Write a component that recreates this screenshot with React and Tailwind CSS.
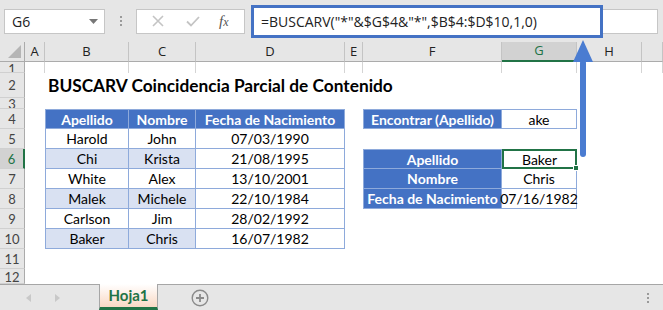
import React from 'react'

const people = [
  ['Harold', 'John', '07/03/1990'],
  ['Chi', 'Krista', '21/08/1995'],
  ['White', 'Alex', '13/10/2001'],
  ['Malek', 'Michele', '22/10/1984'],
  ['Carlson', 'Jim', '28/02/1992'],
  ['Baker', 'Chris', '16/07/1982'],
]

const colNames = ['A', 'B', 'C', 'D', 'E', 'F', 'G', 'H', '']
const rows = [1, 2, 3, 4, 5, 6, 7, 8, 9, 10, 11, 12]

const lookup = {
  4: { F: 'Encontrar (Apellido)', G: 'ake' },
  6: { F: 'Apellido', G: 'Baker' },
  7: { F: 'Nombre', G: 'Chris' },
  8: { F: 'Fecha de Nacimiento', G: '07/16/1982' },
}

function RowHeader({ r }) {
  const active = r === 6
  const align = r === 1 || r === 3 ? 'items-end' : r === 12 ? 'items-start' : 'items-center'
  return (
    <div
      className={`flex justify-center overflow-hidden border-b border-[#d0d0d0] text-[13px] leading-[16px] ${align} ${
        active
          ? 'bg-[#d2d2d2] text-[#217346] border-r-2 border-r-[#217346]'
          : 'bg-[#e6e6e6] text-[#444] border-r border-r-[#ababab]'
      }`}
    >
      <span className={r === 1 ? 'mb-[-5px]' : r === 3 ? 'mb-[-4px]' : ''}>{r}</span>
    </div>
  )
}

function Cell({ r, col }) {
  // tabla de la izquierda
  if (r >= 4 && r <= 10 && (col === 'B' || col === 'C' || col === 'D')) {
    const header = r === 4
    const i = col === 'B' ? 0 : col === 'C' ? 1 : 2
    const text = header ? ['Apellido', 'Nombre', 'Fecha de Nacimiento'][i] : people[r - 5][i]
    const shaded = !header && r % 2 === 0 && col !== 'D'
    return (
      <div
        className={`flex items-center justify-center whitespace-nowrap border-r border-b border-[#8eaadb] ${
          col === 'B' ? 'border-l' : ''
        } ${header ? 'border-t bg-[#4472c4] font-bold text-white' : shaded ? 'bg-[#d9e1f2] text-black' : 'bg-white text-black'}`}
      >
        {text}
      </div>
    )
  }

  // tabla de búsqueda
  if (lookup[r] && (col === 'F' || col === 'G')) {
    const text = lookup[r][col]
    const top = r === 4 || r === 6
    if (col === 'F') {
      return (
        <div
          className={`flex items-center justify-center whitespace-nowrap border-l border-r border-b border-[#8eaadb] bg-[#4472c4] font-bold text-white ${
            top ? 'border-t' : ''
          }`}
        >
          {text}
        </div>
      )
    }
    if (r === 6) {
      return (
        <div className="relative flex items-center justify-center border-2 border-[#217346] bg-white text-black">
          {text}
          <span className="absolute -right-[4px] -bottom-[4px] h-[6px] w-[6px] border border-white bg-[#217346]" />
        </div>
      )
    }
    return (
      <div
        className={`flex items-center justify-center whitespace-nowrap border-r border-b border-[#8eaadb] bg-white text-black ${
          top ? 'border-t' : ''
        }`}
      >
        {text}
      </div>
    )
  }

  if (r === 2 && col === 'B') {
    return (
      <div className="relative z-10 flex items-center whitespace-nowrap pl-[3px] text-[17.3px] font-bold text-black">
        BUSCARV Coincidencia Parcial de Contenido
      </div>
    )
  }

  if (r === 1) return <div className="border-r border-[#d4d4d4]" />
  return <div />
}

export default function App() {
  return (
    <div className="relative h-[310px] w-[663px] overflow-hidden bg-white font-['Lato',sans-serif] text-[14px]">
      {/* Barra de fórmulas */}
      <div className="flex h-[42px] items-center bg-[#e6e6e6] pl-[4px] font-['Open_Sans',sans-serif]">
        <div className="flex h-[25px] w-[101px] items-center justify-between border border-[#c6c6c6] bg-white pl-[7px] pr-[6px] text-[14px] text-[#222]">
          <span>G6</span>
          <svg width="9" height="5" viewBox="0 0 9 5">
            <path d="M0 0h9L4.5 5z" fill="#777" />
          </svg>
        </div>
        <div className="flex w-[31px] flex-col items-center gap-[2px]">
          <span className="h-[2px] w-[2px] bg-[#9a9a9a]" />
          <span className="h-[2px] w-[2px] bg-[#9a9a9a]" />
          <span className="h-[2px] w-[2px] bg-[#9a9a9a]" />
        </div>
        <div className="flex h-[25px] w-[109px] items-center border border-[#c6c6c6] bg-white">
          <svg className="ml-[15px]" width="12" height="12" viewBox="0 0 12 12">
            <path d="M1 1l10 10M11 1L1 11" stroke="#c4c4c4" strokeWidth="1.6" />
          </svg>
          <svg className="ml-[22px]" width="14" height="11" viewBox="0 0 14 11">
            <path d="M1 5.5l4 4L13 1" stroke="#c4c4c4" strokeWidth="1.8" fill="none" />
          </svg>
          <span className="ml-[19px] font-['Liberation_Serif',serif] text-[15px] italic text-[#555]">
            f<span className="text-[12px]">x</span>
          </span>
        </div>
        <div className="ml-[6px] flex h-[33px] w-[352px] items-center border-[3px] border-[#4472c4] bg-white pl-[7px] text-[14px] text-[#222]">
          =BUSCARV("*"&amp;$G$4&amp;"*",$B$4:$D$10,1,0)
        </div>
        <div className="h-[25px] w-[55px] border-y border-r border-[#c6c6c6] bg-white" />
      </div>

      {/* Hoja */}
      <div className="grid grid-cols-[25px_20px_84px_67px_149px_18px_139px_75px_65px_1fr] grid-rows-[20px_11px_25px_11px_repeat(8,20px)_15px]">
        <div className="relative border-r border-b border-[#ababab] bg-[#e6e6e6]">
          <svg className="absolute right-[3px] bottom-[3px]" width="13" height="13" viewBox="0 0 13 13">
            <path d="M13 0v13H0z" fill="#b5b5b5" />
          </svg>
        </div>
        {colNames.map((c) =>
          c === 'G' ? (
            <div
              key={c}
              className="flex items-center justify-center border-r border-b-2 border-r-[#c4c4c4] border-b-[#217346] bg-[#d2d2d2] text-[13px] text-[#217346] font-['Open_Sans',sans-serif]"
            >
              {c}
            </div>
          ) : (
            <div
              key={c || 'x'}
              className="flex items-center justify-center border-r border-b border-r-[#c4c4c4] border-b-[#ababab] bg-[#e6e6e6] text-[13px] text-[#222] font-['Open_Sans',sans-serif]"
            >
              {c}
            </div>
          )
        )}
        {rows.map((r) => (
          <React.Fragment key={r}>
            <RowHeader r={r} />
            {colNames.map((c) => (
              <Cell key={c || 'x'} r={r} col={c} />
            ))}
          </React.Fragment>
        ))}
      </div>

      {/* Pestañas */}
      <div className="flex h-[26px] items-stretch border-t border-[#a6a6a6] bg-[#e6e6e6]">
        <div className="flex w-[99px] items-center">
          <svg className="ml-[26px]" width="5" height="8" viewBox="0 0 5 8">
            <path d="M5 0v8L0 4z" fill="#c8c8c8" />
          </svg>
          <svg className="ml-[24px]" width="5" height="8" viewBox="0 0 5 8">
            <path d="M0 0v8l5-4z" fill="#c8c8c8" />
          </svg>
        </div>
        <div className="-mt-px flex w-[59px] items-center justify-center border-x border-b-[3px] border-x-[#a6a6a6] border-b-[#217346] bg-gradient-to-b from-white to-[#f9d8c4] font-bold text-[15px] text-[#217346]">
          Hoja1
        </div>
        <div className="flex items-center pl-[33px]">
          <svg width="18" height="18" viewBox="0 0 18 18">
            <circle cx="9" cy="9" r="7.8" stroke="#8a8a8a" strokeWidth="1.4" fill="none" />
            <path d="M9 5v8M5 9h8" stroke="#8a8a8a" strokeWidth="1.8" />
          </svg>
        </div>
        <div className="ml-auto mr-[14px] flex flex-col justify-center gap-[2px]">
          <span className="h-[2px] w-[2px] bg-[#9a9a9a]" />
          <span className="h-[2px] w-[2px] bg-[#9a9a9a]" />
          <span className="h-[2px] w-[2px] bg-[#9a9a9a]" />
        </div>
      </div>

      {/* Flecha */}
      <svg className="absolute left-[570px] top-[38px]" width="26" height="122" viewBox="0 0 26 122">
        <path d="M13 2L3 24h20z" fill="#4a7cd1" />
        <rect x="10" y="22" width="6" height="97" rx="3" fill="#4a7cd1" />
      </svg>
    </div>
  )
}
